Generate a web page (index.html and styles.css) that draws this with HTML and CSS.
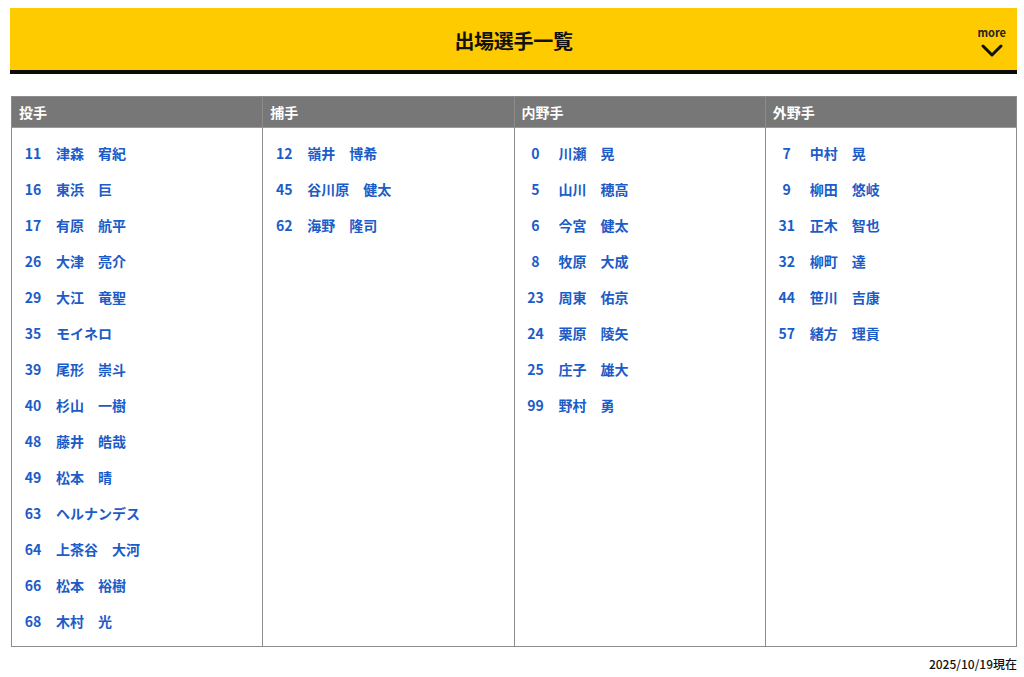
FILE: index.html
```html
<!DOCTYPE html>
<html lang="ja">
<head>
<meta charset="utf-8">
<link rel="stylesheet" href="styles.css">
</head>
<body>
<div class="page">
  <header class="head">
    <h1 class="title">出場選手一覧</h1>
    <a class="more">
      <span class="more-label">more</span>
      <svg class="chev" width="22" height="14" viewBox="0 0 22 14"><path d="M2 2 L11 11 L20 2" fill="none" stroke="#111" stroke-width="3" stroke-linecap="round" stroke-linejoin="round"/></svg>
    </a>
  </header>

  <div class="roster">
    <section class="col">
      <h2 class="col-head">投手</h2>
      <ul class="list">
        <li><span class="no">11</span><span class="nm">津森　宥紀</span></li>
        <li><span class="no">16</span><span class="nm">東浜　巨</span></li>
        <li><span class="no">17</span><span class="nm">有原　航平</span></li>
        <li><span class="no">26</span><span class="nm">大津　亮介</span></li>
        <li><span class="no">29</span><span class="nm">大江　竜聖</span></li>
        <li><span class="no">35</span><span class="nm">モイネロ</span></li>
        <li><span class="no">39</span><span class="nm">尾形　崇斗</span></li>
        <li><span class="no">40</span><span class="nm">杉山　一樹</span></li>
        <li><span class="no">48</span><span class="nm">藤井　皓哉</span></li>
        <li><span class="no">49</span><span class="nm">松本　晴</span></li>
        <li><span class="no">63</span><span class="nm">ヘルナンデス</span></li>
        <li><span class="no">64</span><span class="nm">上茶谷　大河</span></li>
        <li><span class="no">66</span><span class="nm">松本　裕樹</span></li>
        <li><span class="no">68</span><span class="nm">木村　光</span></li>
      </ul>
    </section>
    <section class="col">
      <h2 class="col-head">捕手</h2>
      <ul class="list">
        <li><span class="no">12</span><span class="nm">嶺井　博希</span></li>
        <li><span class="no">45</span><span class="nm">谷川原　健太</span></li>
        <li><span class="no">62</span><span class="nm">海野　隆司</span></li>
      </ul>
    </section>
    <section class="col">
      <h2 class="col-head">内野手</h2>
      <ul class="list">
        <li><span class="no">0</span><span class="nm">川瀬　晃</span></li>
        <li><span class="no">5</span><span class="nm">山川　穂高</span></li>
        <li><span class="no">6</span><span class="nm">今宮　健太</span></li>
        <li><span class="no">8</span><span class="nm">牧原　大成</span></li>
        <li><span class="no">23</span><span class="nm">周東　佑京</span></li>
        <li><span class="no">24</span><span class="nm">栗原　陵矢</span></li>
        <li><span class="no">25</span><span class="nm">庄子　雄大</span></li>
        <li><span class="no">99</span><span class="nm">野村　勇</span></li>
      </ul>
    </section>
    <section class="col">
      <h2 class="col-head">外野手</h2>
      <ul class="list">
        <li><span class="no">7</span><span class="nm">中村　晃</span></li>
        <li><span class="no">9</span><span class="nm">柳田　悠岐</span></li>
        <li><span class="no">31</span><span class="nm">正木　智也</span></li>
        <li><span class="no">32</span><span class="nm">柳町　達</span></li>
        <li><span class="no">44</span><span class="nm">笹川　吉康</span></li>
        <li><span class="no">57</span><span class="nm">緒方　理貢</span></li>
      </ul>
    </section>
  </div>

  <p class="asof">2025/10/19現在</p>
</div>
</body>
</html>
```

FILE: styles.css
```css
* { box-sizing: border-box; }
html, body { margin: 0; padding: 0; background: #fff; }
body {
  font-family: "Noto Sans CJK JP", "Noto Sans", sans-serif;
  color: #111;
}
.page {
  width: 1007px;
  margin: 8px 0 0 10px;
}
.head {
  position: relative;
  height: 66px;
  background: #fdcb00;
  border-bottom: 4px solid #0a0a0a;
  display: flex;
  align-items: center;
  justify-content: center;
}
.title {
  margin: 0;
  font-size: 20px;
  font-weight: 700;
  line-height: 1;
  letter-spacing: -0.3px;
  padding-top: 4px;
}
.more {
  position: absolute;
  right: 11px;
  top: 18px;
  display: flex;
  flex-direction: column;
  align-items: center;
}
.more-label {
  font-size: 11px;
  font-weight: 700;
  line-height: 12px;
  color: #222;
}
.chev { margin-top: 6px; }

.roster {
  margin: 22px 0 0 1px;
  width: 1006px;
  display: flex;
  border: 1px solid #8c8c8c;
  border-right: 0;
}
.col {
  flex: 1 1 0;
  border-right: 1px solid #8c8c8c;
}
.col-head {
  margin: 0;
  height: 31px;
  background: #777;
  color: #fff;
  font-size: 14px;
  font-weight: 700;
  line-height: 31px;
  padding-left: 7px;
  border-bottom: 1px solid #9a9a9a;
}
.list {
  list-style: none;
  margin: 0;
  padding: 7px 0 7px 0;
}
.list li {
  display: flex;
  height: 36px;
  align-items: center;
  color: #1b5cc8;
  font-size: 14px;
  font-weight: 700;
}
.no {
  width: 42px;
  text-align: center;
}
.nm {
  margin-left: 2px;
}
.asof {
  margin: 8px 0 0 0;
  text-align: right;
  font-size: 12px;
  font-weight: 500;
  line-height: 17px;
  color: #111;
}
```
